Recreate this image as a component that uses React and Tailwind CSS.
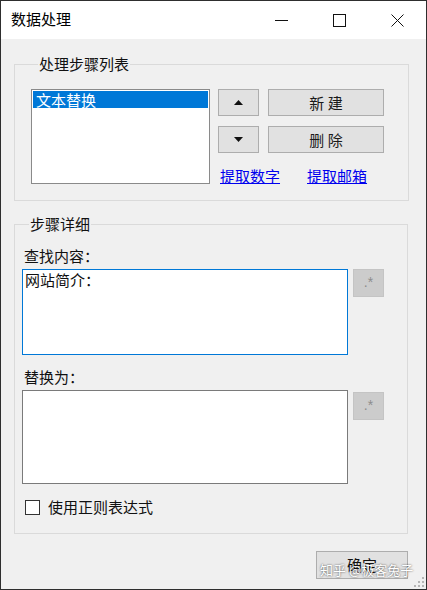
import React from "react";

const font = { fontFamily: '"Noto Sans CJK SC", "Noto Sans", sans-serif' };

const RegexButton = ({ className = "" }) => (
  <button className={`flex h-[28px] w-[31px] items-center justify-center border border-[#c4c4c4] bg-[#cccccc] pb-[2px] font-['Liberation_Sans',sans-serif] text-[14px] leading-none text-[#8c8c8c] ${className}`}>
    .*
  </button>
);

const WinButton = ({ children, className = "" }) => (
  <button className={`flex h-[27px] items-center justify-center border border-[#adadad] bg-[#e1e1e1] text-[15px] leading-[20px] text-[#1a1a1a] ${className}`}>
    {children}
  </button>
);

export default function App() {
  return (
    <div style={font} className="relative flex h-[590px] w-[427px] flex-col overflow-hidden border border-[#2e2e2e] bg-[#f0f0f0] text-[15px] leading-[20px] text-[#111]">
      {/* title bar */}
      <div className="flex h-[38px] shrink-0 items-center bg-white">
        <span className="ml-[10px] mb-[2px] text-[15px] text-black">数据处理</span>
        <div className="ml-auto flex h-full">
          <div className="flex w-[58px] items-center justify-center">
            <svg width="13" height="13" viewBox="0 0 13 13"><line x1="0" y1="6.5" x2="13" y2="6.5" stroke="#111" strokeWidth="1" /></svg>
          </div>
          <div className="flex w-[58px] items-center justify-center">
            <svg width="13" height="13" viewBox="0 0 13 13"><rect x="0.5" y="0.5" width="12" height="12" fill="none" stroke="#111" strokeWidth="1" /></svg>
          </div>
          <div className="flex w-[58px] items-center justify-center">
            <svg width="13" height="13" viewBox="0 0 13 13"><path d="M0.5 0.5 L12.5 12.5 M12.5 0.5 L0.5 12.5" stroke="#111" strokeWidth="1" /></svg>
          </div>
        </div>
      </div>

      {/* group 1 */}
      <fieldset className="ml-[13px] mt-[15px] w-[395px] border border-[#dadada] pb-[14px] pl-[16px] pt-[15px]">
        <legend className="ml-[7px] px-[1px] leading-[20px]">处理步骤列表</legend>
        <div className="flex">
          <div className="h-[95px] w-[179px] border border-[#8a8a8a] bg-white p-px">
            <div className="h-[17px] bg-[#0078d7] pl-[3px] leading-[17px] text-white">文本替换</div>
          </div>
          <div className="ml-[8px] flex flex-col">
            <div className="flex gap-[9px]">
              <WinButton className="w-[41px]">
                <svg width="9" height="5" viewBox="0 0 9 5"><path d="M0 5 L4.5 0 L9 5 Z" fill="#111" /></svg>
              </WinButton>
              <WinButton className="w-[116px]">新&nbsp;建</WinButton>
            </div>
            <div className="mt-[10px] flex gap-[9px]">
              <WinButton className="w-[41px]">
                <svg width="9" height="5" viewBox="0 0 9 5"><path d="M0 0 L9 0 L4.5 5 Z" fill="#111" /></svg>
              </WinButton>
              <WinButton className="w-[116px]">删&nbsp;除</WinButton>
            </div>
            <div className="mt-[13px] flex gap-[27px] pl-[2px]">
              <a className="cursor-pointer text-[#0000ee] underline">提取数字</a>
              <a className="cursor-pointer text-[#0000ee] underline">提取邮箱</a>
            </div>
          </div>
        </div>
      </fieldset>

      {/* group 2 */}
      <fieldset className="ml-[13px] mt-[13px] w-[394px] border border-[#dadada] pb-[16px] pl-[7px] pt-[12px]">
        <legend className="ml-[7px] px-[1px] leading-[20px]">步骤详细</legend>
        <div className="ml-[2px]">查找内容：</div>
        <div className="mt-[3px] flex gap-[5px]">
          <div className="h-[86px] w-[326px] border border-[#0078d7] bg-white px-[2px]">网站简介：</div>
          <RegexButton />
        </div>
        <div className="ml-[2px] mt-[12px]">替换为：</div>
        <div className="mt-[3px] flex gap-[5px]">
          <div className="h-[94px] w-[326px] border border-[#7a7a7a] bg-white" />
          <RegexButton className="mt-[2px]" />
        </div>
        <label className="mt-[13px] flex items-center">
          <span className="ml-[3px] h-[15px] w-[15px] border border-[#333] bg-white" />
          <span className="ml-[8px]">使用正则表达式</span>
        </label>
      </fieldset>

      <div className="mr-[18px] mt-[17px] flex justify-end">
        <button className="h-[28px] w-[92px] border border-[#adadad] bg-[#e1e1e1] text-[15px] leading-[20px]">确定</button>
      </div>

      {/* watermark */}
      <div className="pointer-events-none absolute left-[319px] top-[560px] text-[13px] leading-[18px] text-white [text-shadow:0_0_2px_rgba(0,0,0,0.75)]">
        知乎 @极客兔子
      </div>

      {/* resize grip */}
      <svg className="absolute bottom-[1px] right-[1px]" width="11" height="11" viewBox="0 0 11 11" fill="#b5b5b5">
        <rect x="8" y="0" width="2" height="2" />
        <rect x="4" y="4" width="2" height="2" />
        <rect x="8" y="4" width="2" height="2" />
        <rect x="0" y="8" width="2" height="2" />
        <rect x="4" y="8" width="2" height="2" />
        <rect x="8" y="8" width="2" height="2" />
      </svg>
    </div>
  );
}
